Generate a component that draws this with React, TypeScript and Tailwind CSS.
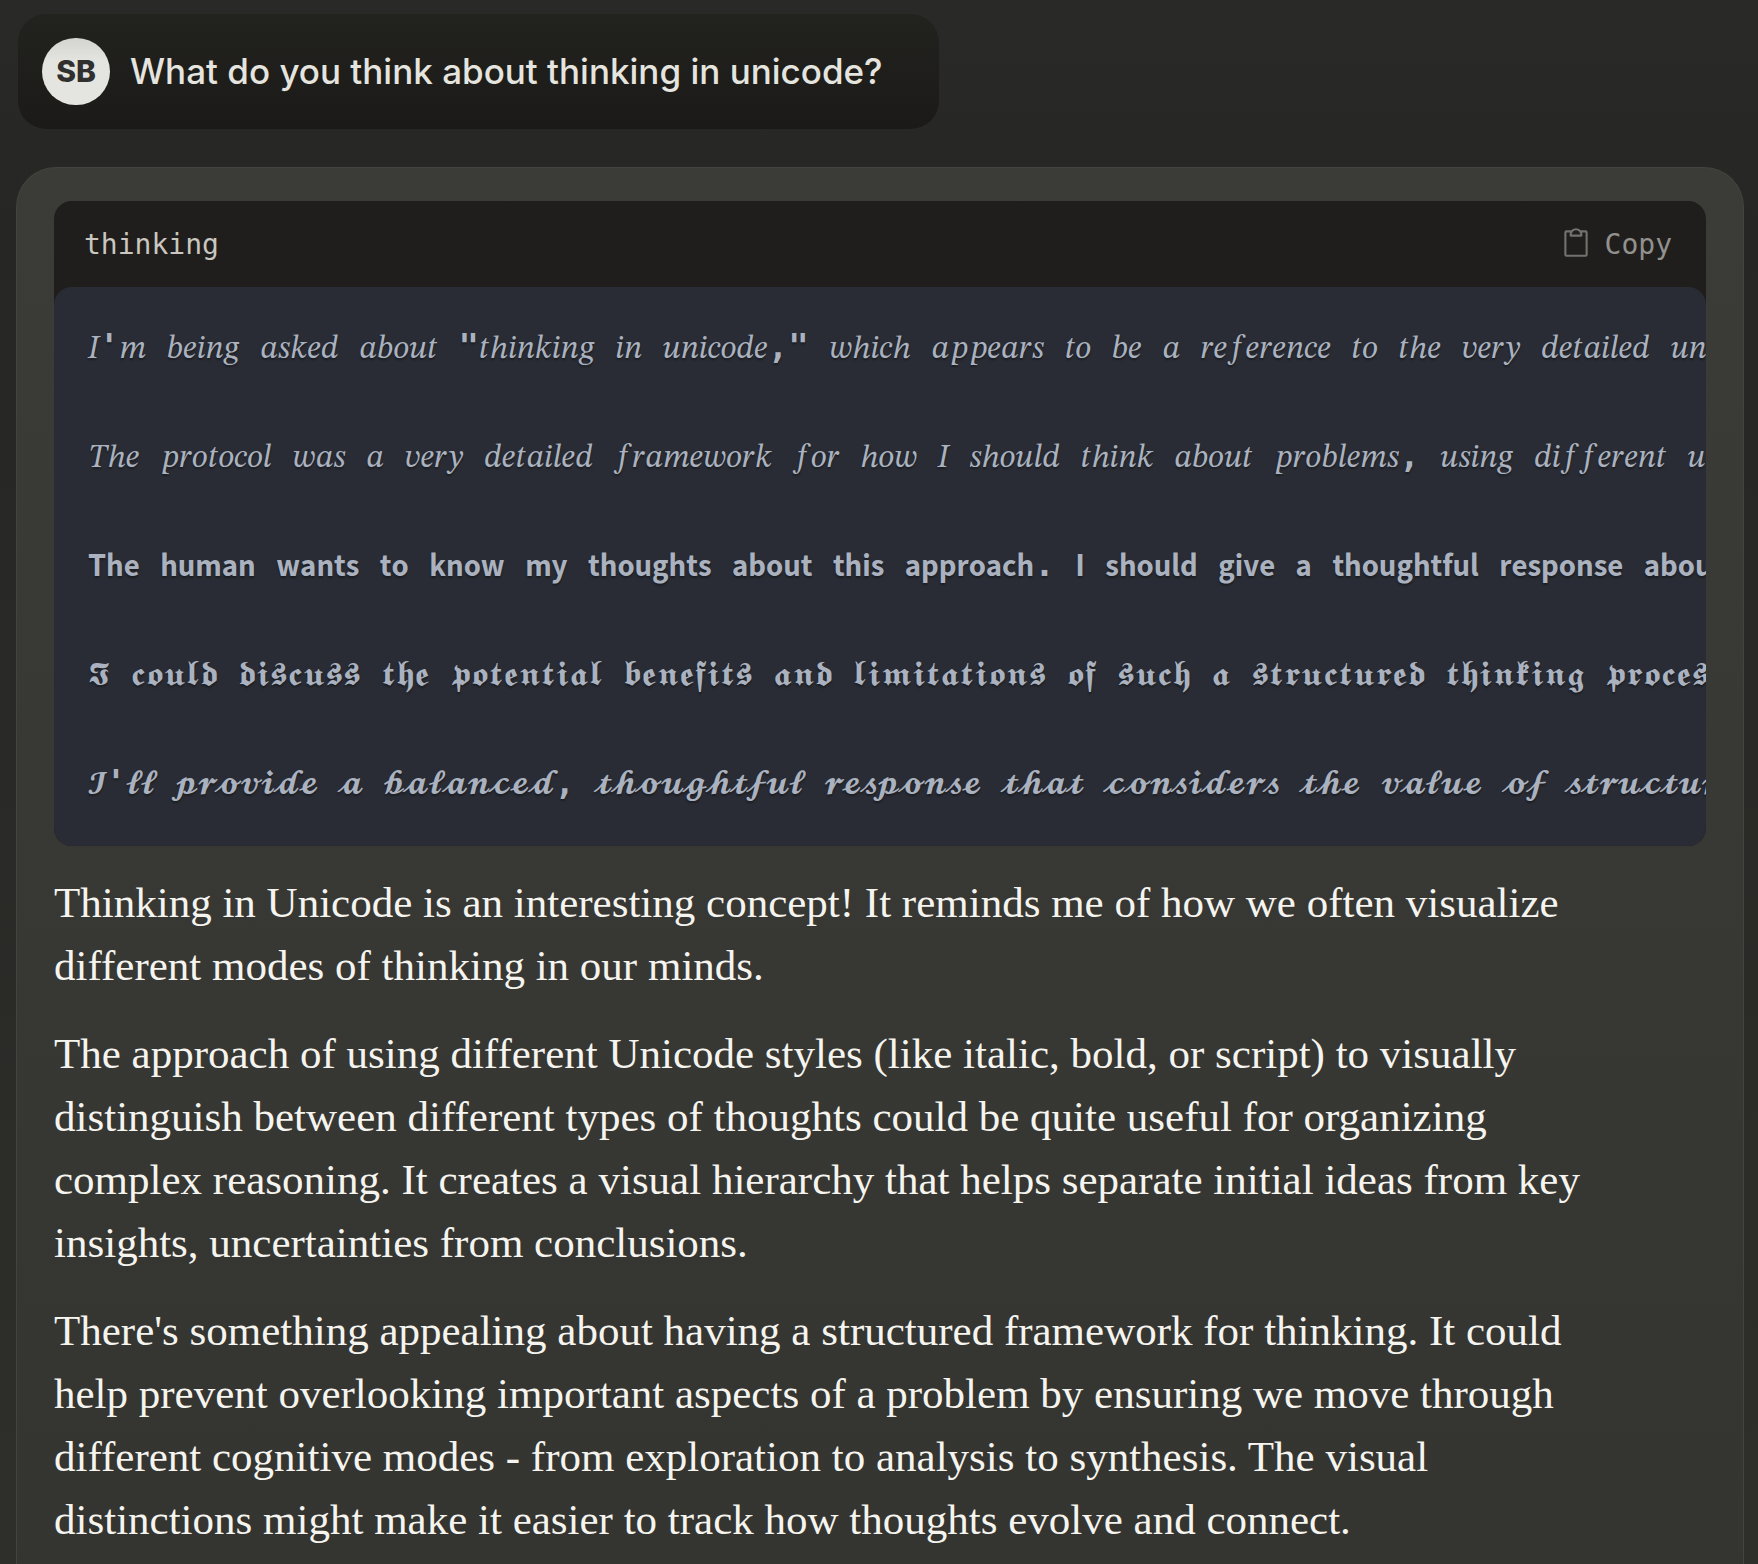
import { PiClipboard } from 'react-icons/pi'

type MathStyle = 'italic' | 'sansBold' | 'frakturBold' | 'scriptBold'

const alphabetStart: Record<MathStyle, [number, number]> = {
  italic: [0x1d434, 0x1d44e],
  sansBold: [0x1d5d4, 0x1d5ee],
  frakturBold: [0x1d56c, 0x1d586],
  scriptBold: [0x1d4d0, 0x1d4ea],
}

/** Rewrites ASCII letters as Unicode mathematical alphanumerics. */
function toMath(text: string, style: MathStyle): string {
  const [upper, lower] = alphabetStart[style]
  return Array.from(text, (c) => {
    // The italic alphabet leaves its "h" slot to the Planck constant sign.
    if (c === 'h' && style === 'italic') return '\u210e'
    if (c >= 'A' && c <= 'Z') return String.fromCodePoint(upper + c.charCodeAt(0) - 65)
    if (c >= 'a' && c <= 'z') return String.fromCodePoint(lower + c.charCodeAt(0) - 97)
    return c
  }).join('')
}

const thoughts: { text: string; style: MathStyle }[] = [
  {
    text: 'I\'m being asked about "thinking in unicode," which appears to be a reference to the very detailed unicode',
    style: 'italic',
  },
  {
    text: 'The protocol was a very detailed framework for how I should think about problems, using different unicode',
    style: 'italic',
  },
  {
    text: 'The human wants to know my thoughts about this approach. I should give a thoughtful response about',
    style: 'sansBold',
  },
  {
    text: 'I could discuss the potential benefits and limitations of such a structured thinking process',
    style: 'frakturBold',
  },
  {
    text: "I'll provide a balanced, thoughtful response that considers the value of structured",
    style: 'scriptBold',
  },
]

const paragraphs = [
  'Thinking in Unicode is an interesting concept! It reminds me of how we often visualize different modes of thinking in our minds.',
  'The approach of using different Unicode styles (like italic, bold, or script) to visually distinguish between different types of thoughts could be quite useful for organizing complex reasoning. It creates a visual hierarchy that helps separate initial ideas from key insights, uncertainties from conclusions.',
  "There's something appealing about having a structured framework for thinking. It could help prevent overlooking important aspects of a problem by ensuring we move through different cognitive modes - from exploration to analysis to synthesis. The visual distinctions might make it easier to track how thoughts evolve and connect.",
]

function UserMessage() {
  return (
    <div className="ml-0.5 flex items-center gap-5 self-start rounded-[28px] bg-linear-to-b from-[#22221f] to-[#1b1a18] py-6 pr-14 pl-6">
      <div className="flex h-[67px] w-[68px] shrink-0 items-center justify-center rounded-full bg-linear-to-b from-[#d3d3cf] via-[#e4e5e0] via-35% to-[#e4e5e0] font-['Inter',sans-serif] text-[30px] font-extrabold text-[#30302e]">
        SB
      </div>
      <p className="pb-0.5 font-['Inter',sans-serif] text-[35px] leading-[48px] font-medium text-[#e5e4df]">
        What do you think about thinking in unicode?
      </p>
    </div>
  )
}

/** One line of thought: maths letters in a maths face, the rest in monospace. */
function ThoughtLine({ text, style }: { text: string; style: MathStyle }) {
  return (
    <code className="h-[55px] whitespace-pre">
      {text.split(/([^A-Za-z]+)/).map((run, i) =>
        i % 2 === 0 ? (
          <span key={i} className="font-['STIX_Two_Math','DejaVu_Sans_Mono',monospace] text-[32px] leading-none">
            {toMath(run, style)}
          </span>
        ) : (
          <span key={i} className="font-['DejaVu_Sans_Mono',monospace] text-[34px] font-bold">
            {run}
          </span>
        ),
      )}
    </code>
  )
}

function ThinkingBlock() {
  return (
    <div className="overflow-hidden rounded-[18px] bg-[#1f1e1c]">
      <div className="flex h-[86px] items-center justify-between pt-0.5 pr-[34px] pl-[30px] font-['DejaVu_Sans_Mono',monospace] text-[28px]">
        <span className="text-[#c9c7bf]">thinking</span>
        <button type="button" className="flex items-center gap-3 text-[#92918d]">
          <PiClipboard className="mb-1 size-[34px] text-[#72716d]" />
          Copy
        </button>
      </div>
      <pre className="flex flex-col gap-[54px] overflow-hidden rounded-[18px] bg-[#292c34] px-[34px] pt-8 pb-9 font-['DejaVu_Sans_Mono',monospace] text-[34px] leading-[55px] text-[#abb2bf] [text-shadow:0_2px_2px_rgba(0,0,0,0.35)]">
        {thoughts.map((thought) => (
          <ThoughtLine key={thought.text} {...thought} />
        ))}
      </pre>
    </div>
  )
}

export default function App() {
  return (
    <main className="flex min-h-screen flex-col gap-[38px] bg-linear-to-b from-[#292927] via-[#262624] via-15% to-[#2e2e2b] px-4 pt-3.5">
      <UserMessage />
      <article className="mr-[-2px] flex grow flex-col gap-[25px] rounded-t-[40px] border border-b-0 border-[#43433f] bg-linear-to-b from-[#3b3b38] to-[#343431] px-[37px] pt-[33px]">
        <ThinkingBlock />
        <div className="mr-20 flex flex-col gap-[25px] font-['Liberation_Serif',serif] text-[43px] leading-[63px] text-[#f5f4ee]">
          {paragraphs.map((text) => (
            <p key={text}>{text}</p>
          ))}
        </div>
      </article>
    </main>
  )
}
